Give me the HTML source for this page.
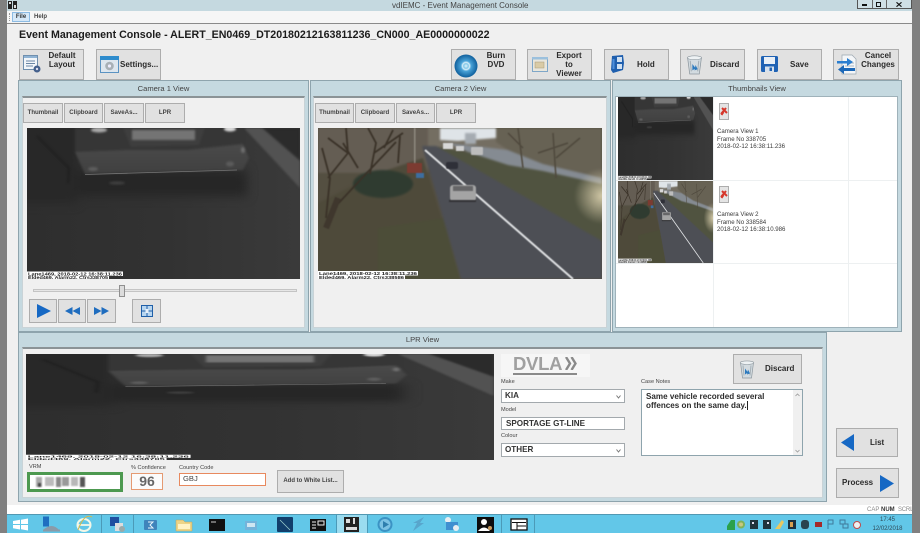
<!DOCTYPE html>
<html><head><meta charset="utf-8"><title>vdIEMC - Event Management Console</title>
<style>
*{box-sizing:border-box}
html,body{margin:0;padding:0;width:920px;height:533px;overflow:hidden;background:#808080}
body{font-family:"Liberation Sans",sans-serif;color:#333}
#r{position:absolute;left:0;top:0;width:920px;height:533px;overflow:hidden;filter:blur(.3px)}
.a,svg.a{position:absolute;display:block}
.t{position:absolute;white-space:nowrap;line-height:1}
.b{position:absolute;background:#e1e1e1;border:1px solid #adadad;font:bold 8px/9.2px "Liberation Sans",sans-serif;color:#2b2b2b;text-align:center}
.b span{position:absolute;white-space:nowrap}
.s{position:absolute;top:103px;height:20px;background:#e1e1e1;border:1px solid #adadad;font:bold 6.1px/18px "Liberation Sans",sans-serif;color:#444;text-align:center;white-space:nowrap}
.p{position:absolute;background:#c5d9e0;border:1px solid #8ea4ad}
.h{position:absolute;font-size:7.6px;line-height:1;color:#444;text-align:center}
.i{position:absolute;background:#f0f0f0;border:1px solid #c9d3d7;border-top:2px solid #8b9396}
.l{position:absolute;font-size:5.6px;line-height:1;color:#444;white-space:nowrap}
.f{position:absolute;background:#fff;border:1px solid #a3a9ad;font:bold 8.100px/12px "Liberation Sans",sans-serif;color:#333;padding-left:3px;white-space:nowrap}
.c{position:absolute;right:3px;top:5px;width:5px;height:4px}
.g{position:absolute;background:#edf0f1}
</style></head><body>
<div id="r">
<svg width="0" height="0" style="position:absolute">
<defs>
<filter id="bw" x="-30%" y="-30%" width="160%" height="160%" color-interpolation-filters="sRGB"><feGaussianBlur stdDeviation="5"/></filter>
<filter id="bl" color-interpolation-filters="sRGB"><feGaussianBlur stdDeviation="1.1"/></filter>
<filter id="bs" color-interpolation-filters="sRGB"><feGaussianBlur stdDeviation=".5"/></filter>
<filter id="bv" color-interpolation-filters="sRGB"><feGaussianBlur stdDeviation=".8"/></filter>
<linearGradient id="grd" x1="0" x2="1" y1="0" y2="0"><stop offset="0" stop-color="#2e2e2e"/><stop offset=".5" stop-color="#323232"/><stop offset="1" stop-color="#3a3a3a"/></linearGradient>
<linearGradient id="bmp" x1="0" x2="0" y1="0" y2="1"><stop offset="0" stop-color="#4a4a4a"/><stop offset="1" stop-color="#404040"/></linearGradient>
<radialGradient id="sun"><stop offset="0" stop-color="#e8dcb8" stop-opacity=".85"/><stop offset="1" stop-color="#e8dcb8" stop-opacity="0"/></radialGradient>
<radialGradient id="dvd"><stop offset="0" stop-color="#dff3fb"/><stop offset=".22" stop-color="#7fc6e8"/><stop offset=".3" stop-color="#dff3fb"/><stop offset=".45" stop-color="#4aa3d8"/><stop offset="1" stop-color="#0f5f9c"/></radialGradient>
<symbol id="car" viewBox="0 0 273 151" preserveAspectRatio="none">
<rect width="273" height="151" fill="url(#grd)"/>
<g filter="url(#bw)">
<rect x="-10" y="-10" width="60" height="85" fill="#282828"/>
<rect x="50" y="42" width="170" height="26" fill="#262626"/>
</g>
<g filter="url(#bl)">
<polygon points="217,0 235,0 273,33 273,60" fill="#525252"/>
<polygon points="236,0 273,0 273,32" fill="#2b2b2b"/>
<rect x="48" y="0" width="170" height="24" fill="#363636"/>
<polygon points="96,0 178,0 172,17 104,19" fill="#3e3e3e"/>
<path d="M48 24 L100 22 L160 22 L216 16 L222 30 L216 42 L58 46 Z" fill="url(#bmp)"/>
<rect x="105" y="2" width="63" height="10" fill="#747474"/>
<path d="M10 8 L42 40 L41 55" stroke="#202020" stroke-width="2" fill="none"/>
<ellipse cx="72" cy="2" rx="8" ry="2.500" fill="#aaa"/><ellipse cx="203" cy="1" rx="6" ry="2.500" fill="#ddd"/>
<ellipse cx="66" cy="41" rx="5" ry="2" fill="#5e5e5e"/><ellipse cx="203" cy="36" rx="4" ry="2.500" fill="#5c5c5c"/>
<ellipse cx="90" cy="55" rx="8" ry="1.600" fill="#404040"/>
<ellipse cx="216" cy="22" rx="2" ry="3" fill="#707070"/>
</g>
<path d="M58 46.500 L210 42" stroke="#767676" stroke-width=".8" fill="none"/>
<rect x="0" y="143.500" width="96" height="4.500" fill="#fff"/><rect x="0" y="147.500" width="82" height="3.500" fill="#fff"/>
<text x="1" y="147.500" font-size="4.400" font-weight="bold" fill="#222" textLength="94" lengthAdjust="spacingAndGlyphs">Lane1469, 2018-02-12 16:38:11.236</text>
<text x="1" y="151" font-size="4.200" font-weight="bold" fill="#222" textLength="80" lengthAdjust="spacingAndGlyphs">Elded469, Alarm22, Ctrs338705</text>
</symbol>
<symbol id="road" viewBox="0 0 284 151" preserveAspectRatio="none">
<rect width="284" height="151" fill="#544f41"/>
<g filter="url(#bl)">
<rect width="284" height="22" fill="#746e62"/>
<polygon points="122,0 182,0 178,10 140,13 122,12" fill="#dfe4e8"/>
<rect x="147" y="5" width="11" height="11" fill="#a5abb1"/>
<rect x="0" y="0" width="110" height="45" fill="#645d53"/>
<polygon points="0,75 60,45 105,30 142,151 0,151" fill="#4e4a3a"/>
<polygon points="60,100 125,90 142,151 60,151" fill="#4c4d38"/>
<ellipse cx="65" cy="56" rx="30" ry="14" fill="#2f3b30"/>
<polygon points="116,18 284,50 284,115 200,80" fill="#505340"/>
<polygon points="178,0 284,0 284,50 225,36 190,22 178,14" fill="#676254"/>
<polygon points="130,15 190,22 225,36 284,50 284,56 225,43 190,37 150,24" fill="#858b92"/>
<polygon points="104,18 118,18 284,113 284,151 143,151" fill="#4d4f55"/>
<circle cx="284" cy="68" r="28" fill="url(#sun)"/>
</g>
<g filter="url(#bs)">
<path d="M8 90 L12 50 L4 20 M10 50 L30 25 L28 0 M16 80 L78 14 M52 46 L58 15 L50 0 M56 25 L85 5 M80 35 L82 8 M30 25 L10 10 M40 40 L25 15 M66 20 L75 2" stroke="#3a3228" stroke-width="1.800" fill="none"/>
<path d="M8 100 L20 70" stroke="#3f372d" stroke-width="6"/>
<path d="M200 0 L205 40 M235 5 L238 50 M220 25 L250 15 M205 20 L190 5 M238 30 L262 10" stroke="#4f493d" stroke-width="1.500" fill="none"/>
<path d="M107 22 L255 151" stroke="#e0e2e4" stroke-width="2" fill="none"/>
<rect x="89" y="35" width="15" height="10" fill="#7c3b31"/><rect x="98" y="45" width="8" height="5" fill="#3d6ea0"/>
<rect x="96" y="0" width="1.500" height="35" fill="#8f8a80"/>
<rect x="132" y="57" width="26" height="16" rx="3" fill="#a4a4a4"/><rect x="135" y="58" width="20" height="5" fill="#666668"/><rect x="131" y="72" width="27" height="2" fill="#333336"/>
<rect x="128" y="34" width="12" height="7" rx="2" fill="#2f3038"/>
<rect x="153" y="19" width="12" height="8" rx="1" fill="#bdbdbd"/><rect x="138" y="18" width="8" height="5" fill="#d0d0d0"/><rect x="125" y="15" width="10" height="6" fill="#d8d8d8"/>
</g>
<rect x="0" y="143" width="100" height="4.500" fill="#fff"/><rect x="0" y="147.500" width="87" height="3.500" fill="#fff"/>
<text x="1" y="147" font-size="4.400" font-weight="bold" fill="#222" textLength="98" lengthAdjust="spacingAndGlyphs">Lane1469, 2018-02-12 16:38:11.236</text>
<text x="1" y="151" font-size="4.200" font-weight="bold" fill="#222" textLength="85" lengthAdjust="spacingAndGlyphs">Elded469, Alarm22, Ctrs338586</text>
</symbol>
<symbol id="bin" viewBox="0 0 16 18">
<path d="M1.500 2 L14.500 2 L12.500 17.500 L3.500 17.500 Z" fill="#d3dbe0" stroke="#8d979e" stroke-width=".7"/>
<ellipse cx="8" cy="2.200" rx="6.800" ry="1.800" fill="#eef2f4" stroke="#8d979e" stroke-width=".6"/>
<path d="M4 5 L5 15 M12 5 L11 15" stroke="#a5afb6" stroke-width="1"/>
<path d="M6 8 L9 12 L6 14 Z M9 9 L11 13 L8 14 Z" fill="#2b79be"/>
</symbol>
<symbol id="xb" viewBox="0 0 10 17">
<rect x=".5" y=".5" width="9" height="16" fill="#e4e4e4" stroke="#adadad"/>
<path d="M2 11 L7 5 M3 5 L8 10 M2.500 12 L4.500 9" stroke="#d6372b" stroke-width="2" fill="none"/>
</symbol>
</defs>
</svg>

<!-- window -->
<div class="a" style="left:7px;top:0;width:905px;height:533px;background:#f0f0f0"></div>
<div class="a" style="left:7px;top:0;width:905px;height:11px;background:#c5d9e0"></div>
<div class="a" style="left:7px;top:11px;width:905px;height:12px;background:#f6f6f6"></div>
<div class="a" style="left:7px;top:23px;width:905px;height:1px;background:#8a8a8a"></div>
<svg class="a" style="left:8px;top:1px;width:9px;height:8px" viewBox="0 0 9 8"><rect width="4" height="8" fill="#222"/><rect x="5" width="4" height="8" fill="#222"/><rect x="1" y="1" width="2" height="2" fill="#ddd"/><rect x="6" y="4" width="2" height="3" fill="#ddd"/></svg>
<div class="t" style="left:392px;top:1.500px;font-size:8px;color:#444;width:136px;text-align:center">vdIEMC - Event Management Console</div>
<div class="a" style="left:857px;top:0;width:55px;height:8.500px;border:1px solid #555;border-top:0;background:#cfdfe5"></div>
<div class="a" style="left:872px;top:0;width:1px;height:8px;background:#666"></div>
<div class="a" style="left:886px;top:0;width:1px;height:8px;background:#666"></div>
<div class="a" style="left:862px;top:4px;width:5px;height:1.500px;background:#111"></div>
<div class="a" style="left:876px;top:1.500px;width:5px;height:5px;border:1.300px solid #111"></div>
<svg class="a" style="left:896px;top:1.500px;width:6px;height:5px" viewBox="0 0 6 5"><path d="M.5 .3 L5.500 4.700 M5.500 .3 L.5 4.700" stroke="#111" stroke-width="1.100"/></svg>
<div class="a" style="left:9px;top:13px;width:1px;height:8px;border-left:1px dotted #999"></div>
<div class="a" style="left:12px;top:12px;width:18px;height:10px;background:#d6e8f7;border:1px solid #8cbbe3;font-size:6px;line-height:8px;text-align:center;color:#333;font-weight:bold">File</div>
<div class="t" style="left:34px;top:14px;font-size:6px;color:#444;font-weight:bold">Help</div>

<div class="t" style="left:19px;top:29.500px;font-size:10.660px;font-weight:bold;color:#1c1c1c;width:480px">Event Management Console - ALERT_EN0469_DT20180212163811236_CN000_AE0000000022</div>

<!-- toolbar -->
<div class="b" style="left:19px;top:49px;width:65px;height:31px"><span style="left:27px;top:1px;width:30px">Default<br>Layout</span>
<svg class="a" style="left:3px;top:5px;width:19px;height:19px" viewBox="0 0 19 19"><rect x=".5" y=".5" width="14" height="14" fill="#f2f6fa" stroke="#6f8fae"/><rect x="1" y="1" width="13" height="2" fill="#8fb3d4"/><path d="M3 6h9M3 8.500h9M3 11h7" stroke="#6a86a5"/><circle cx="14" cy="14" r="3.500" fill="#44608c"/><circle cx="14" cy="14" r="1.200" fill="#dde"/></svg></div>
<div class="b" style="left:96px;top:49px;width:65px;height:31px"><span style="left:23px;top:10px">Settings...</span>
<svg class="a" style="left:3px;top:6px;width:19px;height:17px" viewBox="0 0 19 17"><rect x=".5" y=".5" width="18" height="16" fill="#dde6ee" stroke="#5b93c2"/><rect x="0" y="0" width="19" height="4" fill="#2e8ccd"/><circle cx="9.500" cy="10" r="4.300" fill="#a8b0b6"/><circle cx="9.500" cy="10" r="1.600" fill="#eef"/></svg></div>
<div class="b" style="left:451px;top:49px;width:65px;height:31px"><span style="left:29px;top:1px;width:30px">Burn<br>DVD</span>
<svg class="a" style="left:2px;top:4px;width:24px;height:24px" viewBox="0 0 24 24"><circle cx="12" cy="12" r="11.500" fill="url(#dvd)"/></svg></div>
<div class="b" style="left:527px;top:49px;width:65px;height:31px"><span style="left:23px;top:1px;width:36px">Export<br>to<br>Viewer</span>
<svg class="a" style="left:4px;top:7px;width:16px;height:15px" viewBox="0 0 16 15"><rect x=".5" y=".5" width="15" height="14" fill="#e8e6dc" stroke="#7ea6c8"/><rect y="0" width="16" height="2.500" fill="#9bc0dd"/><rect x="3" y="5" width="9" height="6" fill="#d9cba6" stroke="#a79a78" stroke-width=".5"/></svg></div>
<div class="b" style="left:604px;top:49px;width:65px;height:31px"><span style="left:32px;top:10px">Hold</span>
<svg class="a" style="left:5px;top:5px;width:15px;height:19px" viewBox="0 0 15 19"><path d="M2 1 L13 0 L14 8 L13 15 L3 18 L1 15 Z" fill="#1f5fae"/><rect x="7" y="2" width="5" height="5" fill="#cfe0f2"/><rect x="7" y="9" width="5" height="5" fill="#cfe0f2"/><rect x="2.500" y="4" width="2" height="10" fill="#4d8fdc"/></svg></div>
<div class="b" style="left:680px;top:49px;width:65px;height:31px"><span style="left:29px;top:10px">Discard</span>
<svg class="a" style="left:5px;top:5px;width:17px;height:20px"><use href="#bin"/></svg></div>
<div class="b" style="left:757px;top:49px;width:65px;height:31px"><span style="left:32px;top:10px">Save</span>
<svg class="a" style="left:3px;top:6px;width:17px;height:16px" viewBox="0 0 17 16"><rect width="17" height="16" rx="1.500" fill="#1f62b4"/><rect x="3" y="1" width="11" height="7" fill="#e9eff6"/><rect x="4" y="10.500" width="9" height="5.500" fill="#d7e1ec"/><rect x="8.500" y="11.500" width="2.500" height="3.500" fill="#1f62b4"/></svg></div>
<div class="b" style="left:833px;top:49px;width:66px;height:31px"><span style="left:26px;top:1px;width:36px">Cancel<br>Changes</span>
<svg class="a" style="left:3px;top:4px;width:20px;height:21px" viewBox="0 0 20 21"><path d="M5 1 H15 L19 5 V20 H5 Z" fill="#f4f6f8" stroke="#9ba7b0" stroke-width=".7"/><path d="M8 9h9M8 12h9M8 15h9" stroke="#a8b6c2"/><path d="M0 7 H10 V4 L16 8 L10 12 V9.500 H0 Z" fill="#2a7ed0"/><path d="M18 14 H7 V11 L1 15.500 L7 20 V17 H18 Z" fill="#1c68b8"/></svg></div>

<!-- camera 1 panel -->
<div class="p" style="left:18px;top:80px;width:291px;height:252px"></div>
<div class="h" style="left:18px;top:85px;width:291px">Camera 1 View</div>
<div class="i" style="left:22px;top:96px;width:283px;height:232px"></div>
<div class="s" style="left:23px;width:40px">Thumbnail</div>
<div class="s" style="left:64px;width:39px">Clipboard</div>
<div class="s" style="left:104px;width:40px">SaveAs...</div>
<div class="s" style="left:145px;width:40px">LPR</div>
<svg class="a" style="left:27px;top:128px;width:273px;height:151px"><use href="#car"/></svg>
<div class="a" style="left:33px;top:289px;width:264px;height:3px;background:#e6e6e6;border:1px solid #c4c4c4"></div>
<div class="a" style="left:119px;top:284.500px;width:6px;height:12px;background:#dcdcdc;border:1px solid #8f8f8f"></div>
<div class="b" style="left:29px;top:299px;width:28px;height:24px"><svg class="a" style="left:7px;top:4px;width:14px;height:14px" viewBox="0 0 14 14"><path d="M0 0 L14 7 L0 14 Z" fill="#1668c4"/></svg></div>
<div class="b" style="left:58px;top:299px;width:28px;height:24px"><svg class="a" style="left:6px;top:7px;width:15px;height:8px" viewBox="0 0 15 8"><path d="M7.500 0 V8 L0 4 Z M15 0 V8 L7.500 4 Z" fill="#1f6dbf"/></svg></div>
<div class="b" style="left:87px;top:299px;width:29px;height:24px"><svg class="a" style="left:6px;top:7px;width:15px;height:8px" viewBox="0 0 15 8"><path d="M0 0 V8 L7.500 4 Z M7.500 0 V8 L15 4 Z" fill="#1f6dbf"/></svg></div>
<div class="b" style="left:132px;top:299px;width:29px;height:24px"><svg class="a" style="left:8px;top:5px;width:12px;height:12px" viewBox="0 0 12 12"><rect width="12" height="12" fill="#1f5fa8"/><rect x="1" y="1" width="10" height="10" fill="#b8d6f0"/><path d="M6 1V11M1 6H11" stroke="#1f5fa8"/><rect x="4.500" y="4" width="3" height="4" fill="#e8f1fa"/></svg></div>

<!-- camera 2 panel -->
<div class="p" style="left:310px;top:80px;width:301px;height:252px"></div>
<div class="h" style="left:310px;top:85px;width:301px">Camera 2 View</div>
<div class="i" style="left:313px;top:96px;width:294px;height:232px"></div>
<div class="s" style="left:315px;width:39px">Thumbnail</div>
<div class="s" style="left:355px;width:40px">Clipboard</div>
<div class="s" style="left:396px;width:39px">SaveAs...</div>
<div class="s" style="left:436px;width:40px">LPR</div>
<svg class="a" style="left:318px;top:128px;width:284px;height:151px"><use href="#road"/></svg>

<!-- thumbnails panel -->
<div class="p" style="left:612px;top:80px;width:290px;height:252px"></div>
<div class="h" style="left:612px;top:85px;width:290px">Thumbnails View</div>
<div class="a" style="left:615px;top:96px;width:283px;height:232px;background:#fff;border:1px solid #9fb2ba"></div>
<div class="g" style="left:713px;top:97px;width:1px;height:230px"></div>
<div class="g" style="left:848px;top:97px;width:1px;height:230px"></div>
<div class="g" style="left:616px;top:180px;width:281px;height:1px"></div>
<div class="g" style="left:616px;top:263px;width:281px;height:1px"></div>
<svg class="a" style="left:618px;top:97px;width:95px;height:83px"><use href="#car"/></svg>
<svg class="a" style="left:618px;top:181px;width:95px;height:82px"><use href="#road"/></svg>
<svg class="a" style="left:719px;top:103px;width:10px;height:17px"><use href="#xb"/></svg>
<svg class="a" style="left:719px;top:186px;width:10px;height:17px"><use href="#xb"/></svg>
<div class="t" style="left:717px;top:128px;font-size:6.100px;line-height:7.500px;color:#3a3a3a">Camera View 1<br>Frame No 338705<br>2018-02-12 16:38:11.236</div>
<div class="t" style="left:717px;top:211px;font-size:6.100px;line-height:7.500px;color:#3a3a3a">Camera View 2<br>Frame No 338584<br>2018-02-12 16:38:10.986</div>

<!-- LPR panel -->
<div class="p" style="left:18px;top:332px;width:809px;height:170px"></div>
<div class="h" style="left:18px;top:336px;width:809px">LPR View</div>
<div class="i" style="left:22px;top:347px;width:801px;height:151px"></div>
<svg class="a" style="left:26px;top:354px;width:468px;height:106px"><use href="#car"/></svg>
<div class="l" style="left:29px;top:465px">VRM</div>
<div class="a" style="left:26.500px;top:471.500px;width:96px;height:20.500px;background:#fff;border:3px solid #4d9950"></div>
<svg class="a" style="left:31px;top:475px;width:66px;height:14px" viewBox="0 0 66 14"><g filter="url(#bv)"><rect x="5" y="2" width="6" height="10" fill="#aaa"/><rect x="14" y="2" width="9" height="9" fill="#bbb"/><rect x="25" y="2" width="5" height="10" fill="#888"/><rect x="31" y="2" width="7" height="9" fill="#999"/><rect x="40" y="2" width="7" height="9" fill="#b8b8b8"/><rect x="49" y="2" width="5" height="10" fill="#555"/><rect x="7" y="8" width="3" height="4" fill="#444"/></g></svg>
<div class="l" style="left:131px;top:465.500px">% Confidence</div>
<div class="a" style="left:131px;top:473px;width:32px;height:17px;background:#fbfbfb;border:1px solid #e59a72;font:bold 14px/15px 'Liberation Sans',sans-serif;color:#666;text-align:center">96</div>
<div class="l" style="left:179px;top:465.500px">Country Code</div>
<div class="a" style="left:179px;top:473px;width:87px;height:13px;background:#fff;border:1.500px solid #e8895e;font-size:7.600px;line-height:10px;padding-left:3px;color:#444">GBJ</div>
<div class="b" style="left:277px;top:470px;width:67px;height:22.500px;font-size:6px;line-height:20px;color:#444">Add to White List...</div>

<div class="a" style="left:501px;top:354px;width:89px;height:23px;background:#f6f6f6"></div>
<div class="t" style="left:513px;top:355px;font-size:18.500px;font-weight:bold;color:#a0a0a0;letter-spacing:-.3px">DVLA</div>
<svg class="a" style="left:565px;top:357px;width:12px;height:13px" viewBox="0 0 12 13"><path d="M1 0 L5 6.500 L1 13 M6.500 0 L10.500 6.500 L6.500 13" stroke="#8a8a8a" stroke-width="2.400" fill="none"/></svg>
<div class="a" style="left:513px;top:372.500px;width:64px;height:2px;background:#8a8a8a"></div>
<div class="l" style="left:501px;top:380px">Make</div>
<div class="f" style="left:501px;top:389px;width:124px;height:14px">KIA<svg class="c" viewBox="0 0 5 4"><path d="M.5 .5 L2.500 3 L4.500 .5" stroke="#777" fill="none"/></svg></div>
<div class="l" style="left:501px;top:408px">Model</div>
<div class="f" style="left:501px;top:417px;width:124px;height:13px;padding-left:4px;line-height:11px">SPORTAGE GT-LINE</div>
<div class="l" style="left:501px;top:434px">Colour</div>
<div class="f" style="left:501px;top:443px;width:124px;height:14px">OTHER<svg class="c" viewBox="0 0 5 4"><path d="M.5 .5 L2.500 3 L4.500 .5" stroke="#777" fill="none"/></svg></div>
<div class="l" style="left:641px;top:380px">Case Notes</div>
<div class="a" style="left:641px;top:389px;width:162px;height:67px;background:#fff;border:1px solid #8ea4ad;font:bold 8.100px/9.300px 'Liberation Sans',sans-serif;color:#2c2c2c;padding:1.500px 4px">Same vehicle recorded several<br>offences on the same day.<span style="border-left:1px solid #222;margin-left:.5px"></span></div>
<div class="a" style="left:793px;top:390px;width:9px;height:65px;background:#f0f0f0"></div>
<svg class="a" style="left:795px;top:393px;width:5px;height:60px" viewBox="0 0 5 60"><path d="M.5 3 L2.500 1 L4.500 3 M.5 57 L2.500 59 L4.500 57" stroke="#999" fill="none" stroke-width=".8"/></svg>
<div class="b" style="left:733px;top:354px;width:69px;height:30px"><span style="left:31px;top:9px">Discard</span>
<svg class="a" style="left:5px;top:5px;width:16px;height:19px"><use href="#bin"/></svg></div>

<!-- right buttons -->
<div class="b" style="left:836px;top:428px;width:62px;height:29px"><span style="left:33px;top:9px">List</span>
<svg class="a" style="left:4px;top:5px;width:13px;height:17px" viewBox="0 0 13 17"><path d="M13 0 V17 L0 8.500 Z" fill="#1668c4"/></svg></div>
<div class="b" style="left:836px;top:468px;width:63px;height:29.500px"><span style="left:5px;top:9px">Process</span>
<svg class="a" style="left:43px;top:6px;width:14px;height:17px" viewBox="0 0 14 17"><path d="M0 0 V17 L14 8.500 Z" fill="#1668c4"/></svg></div>

<!-- status bar -->
<div class="a" style="left:7px;top:505px;width:905px;height:9px;background:#fff"></div>
<div class="t" style="left:867px;top:507px;font-size:6px;color:#888">CAP</div>
<div class="t" style="left:881px;top:507px;font-size:6px;color:#333;font-weight:bold">NUM</div>
<div class="t" style="left:898px;top:507px;font-size:6px;color:#888;letter-spacing:-.2px">SCRL</div>

<!-- taskbar -->
<div class="a" style="left:7px;top:514px;width:905px;height:19px;background:#62c7e8;border-top:1px solid #5298b2"></div>
<div class="a" style="left:336px;top:515px;width:31px;height:18px;background:#9bdcf0"></div>
<div class="a" style="left:101px;top:515px;width:1px;height:18px;background:#4b9ab8"></div>
<div class="a" style="left:133px;top:515px;width:1px;height:18px;background:#4b9ab8"></div>
<div class="a" style="left:336px;top:515px;width:1px;height:18px;background:#4b9ab8"></div>
<div class="a" style="left:367px;top:515px;width:1px;height:18px;background:#4b9ab8"></div>
<div class="a" style="left:501px;top:515px;width:1px;height:18px;background:#4b9ab8"></div>
<div class="a" style="left:534px;top:515px;width:1px;height:18px;background:#4b9ab8"></div>
<svg class="a" style="left:0;top:515px;width:560px;height:18px" viewBox="0 0 560 18">
<path d="M13 6 L20 4.800 V9 H13 Z M21 4.700 L28 3.500 V9 H21 Z M13 10 H20 V14.500 L13 13.300 Z M21 10 H28 V15.500 L21 14.300 Z" fill="#fff"/>
<rect x="43" y="1.500" width="6" height="10" fill="#1f6fc0"/><path d="M43 15 Q52 7 59 15 Z" fill="#8a9ba8"/><rect x="43" y="14.500" width="17" height="2" fill="#8a9ba8"/>
<ellipse cx="84" cy="10" rx="6.500" ry="6" fill="none" stroke="#f2f7e8" stroke-width="2"/><path d="M78 10 H90" stroke="#f2f7e8" stroke-width="1.800"/><path d="M78 15 Q84 -2 92 2" stroke="#d6b94a" stroke-width="1" fill="none"/>
<rect x="110" y="2" width="9" height="9" fill="#1f4fa0"/><rect x="115" y="8" width="8" height="8" fill="#ddd"/><circle cx="122" cy="14" r="3" fill="#9aa"/>
<rect x="144" y="5" width="13" height="10" rx="1" fill="#3f84bb"/><path d="M148 7h5l-3 3 3 3h-5" stroke="#e8f4fa" fill="none"/>
<path d="M176 5 H183 L185 7 H192 V16 H176 Z" fill="#ecd487" stroke="#b9a35e" stroke-width=".5"/><rect x="178" y="9" width="12" height="5" fill="#fff3c4"/>
<rect x="209" y="4" width="16" height="12" fill="#111"/><path d="M211 7h5" stroke="#ccc"/>
<rect x="245" y="6" width="12" height="9" fill="#73b3da"/><rect x="247" y="8" width="8" height="4" fill="#cfe6f2"/>
<rect x="277" y="2" width="16" height="15" rx="1" fill="#123f6c"/><path d="M280 5 L290 15" stroke="#9cc" stroke-width=".8"/>
<rect x="310" y="4" width="16" height="12" fill="#111"/><path d="M312 7h4M312 10h4M312 13h4M318 6h6v4h-6z" stroke="#eee" fill="none"/>
<rect x="344" y="2" width="15" height="15" fill="#222"/><rect x="346" y="4" width="4" height="4" fill="#ddd"/><rect x="353" y="3" width="2" height="6" fill="#ddd"/><rect x="346" y="12" width="11" height="3" fill="#ddd"/>
<circle cx="385" cy="9.500" r="7.500" fill="#3b93c4"/><circle cx="385" cy="9.500" r="5.500" fill="#7cc3e4"/><path d="M383 6 L389 9.500 L383 13 Z" fill="#2e7fae"/>
<path d="M413 16 L417 8 L413 8 L424 2 L420 8 L424 8 Z" fill="#58a6cc"/>
<ellipse cx="448" cy="5" rx="3" ry="3" fill="#e8eef2"/><rect x="446" y="7" width="12" height="8" fill="#3f8fd0"/><circle cx="456" cy="13" r="3" fill="#e8eef2"/>
<rect x="477" y="2" width="17" height="16" fill="#0d0d0d"/><circle cx="484" cy="7" r="3" fill="#fff"/><path d="M478 16 Q484 9 490 16 Z" fill="#fff"/><circle cx="490" cy="13" r="2" fill="#c89a5c"/>
<rect x="511" y="4" width="16" height="11" fill="#fff" stroke="#111" stroke-width="1.300"/><path d="M512 7.500h14M517 7.500v7M517 11h9" stroke="#111"/>
</svg>
<svg class="a" style="left:720px;top:515px;width:145px;height:18px" viewBox="0 0 145 18">
<path d="M7 11 L11 5 H15 V15 H7 Z" fill="#2aa14a"/>
<circle cx="21" cy="9.500" r="4" fill="#7fb25a"/><circle cx="21" cy="9.500" r="2" fill="#c8c880"/>
<rect x="30" y="5" width="8" height="9" fill="#20323a"/><rect x="32" y="7" width="2" height="2" fill="#dde"/>
<rect x="43" y="5" width="8" height="9" fill="#20323a"/><rect x="47" y="7" width="2" height="2" fill="#dde"/>
<path d="M55 14 L62 5 L64 7 L60 14 Z" fill="#e8c860"/>
<rect x="68" y="5" width="8" height="9" fill="#1b3140"/><rect x="70" y="7" width="3" height="5" fill="#d8a050"/>
<rect x="81" y="5" width="8" height="9" fill="#2a4450" rx="3"/>
<rect x="95" y="7" width="7" height="5" fill="#a42a2a"/>
<path d="M108 5 V14 M108 5 H113 V9 H108" stroke="#3f7a9a" fill="none"/>
<rect x="120" y="5" width="5" height="4" fill="none" stroke="#3f7a9a"/><rect x="123" y="9" width="5" height="4" fill="none" stroke="#3f7a9a"/>
<circle cx="137" cy="10" r="3.500" fill="#f0f0f0" stroke="#c04a4a"/>
</svg>
<div class="t" style="left:871px;top:516px;width:33px;text-align:center;font-size:6px;line-height:8.500px;color:#2f4a58">17:45<br>12/02/2018</div>
</div>
</body></html>
